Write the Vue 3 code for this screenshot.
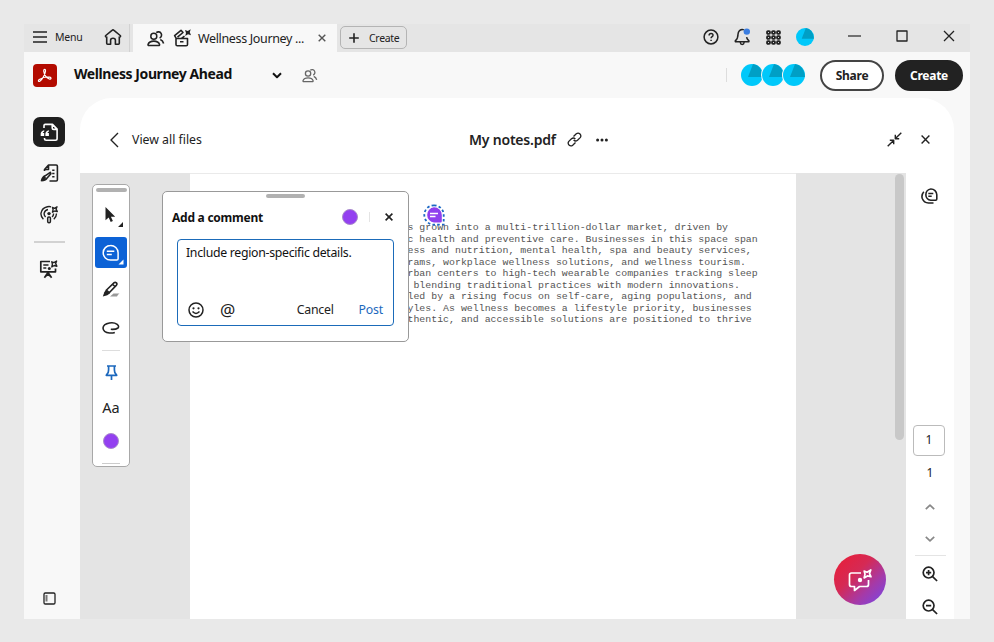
<script setup>
import { ref } from 'vue'

const comment = ref('Include region-specific details.')

const notes = [
    's grown into a multi-trillion-dollar market, driven by',
    'c health and preventive care. Businesses in this space span',
    'ess and nutrition, mental health, spa and beauty services,',
    'rams, workplace wellness solutions, and wellness tourism.',
    'rban centers to high-tech wearable companies tracking sleep',
    ' blending traditional practices with modern innovations.',
    'led by a rising focus on self-care, aging populations, and',
    'yles. As wellness becomes a lifestyle priority, businesses',
    'thentic, and accessible solutions are positioned to thrive'
]
</script>

<template>
    <div class="window">
        <div class="tabs">
            <div class="tabs__menu">
                <svg width="14" height="12" viewBox="0 0 14 12"><path d="M0 1h14M0 6h14M0 11h14" stroke-width="1.5" /></svg>
                <span class="tabs__menu-text">Menu</span>
                <svg class="tabs__home" width="18" height="18" viewBox="0 0 18 18">
                    <path d="M2.2 8.9q-1.300-.4-.4-1.400L8 2.300q1-.9 2 0l6.200 5.200q.9 1-.4 1.400M2.700 8.500v6.800q0 .9.9.9h3v-4q0-1.900 2.400-1.900t2.400 1.900v4h3q.9 0 .9-.9V8.500" stroke-width="1.600" />
                </svg>
            </div>
            <div class="tab">
                <svg width="18" height="17" viewBox="0 0 18 17">
                    <circle cx="6.8" cy="6.2" r="3" />
                    <path d="M2 15.500q-1.200 0-.9-1.200 1.200-3.200 5.700-3.200t5.700 3.200q.3 1.200-.9 1.200zM9.300 2.600a3.200 3.200 0 1 1 3.300 5.400M13.300 9.500q2.600 1.100 3.300 4" stroke-width="1.600" />
                </svg>
                <svg class="tab__kit" width="19" height="18" viewBox="0 0 19 18">
                    <path d="M3 9.500h11.500v6q0 1.300-1.300 1.300H4.300q-1.300 0-1.300-1.300zM7 12.800h3.500M3.200 9.300 1.600 6.700 8 1.300l2 2.200-5.500 4.600M8.500 9.300l3-2.200" stroke-width="1.600" />
                    <path class="fill" d="m12 1 2.800 1L17.700.3l-.9 2.900L18 6.200l-3-1-2.800 1.700.8-3z" />
                </svg>
                <span class="tab__title">Wellness Journey ...</span>
                <svg class="tab__close" width="8" height="8" viewBox="0 0 8 8"><path d="m.7.7 6.6 6.6m0-6.6L.7 7.3" stroke-width="1.4" /></svg>
            </div>
            <button class="tabs__create">
                <svg width="10" height="10" viewBox="0 0 10 10"><path d="M5 .2v9.6M.2 5h9.6" stroke-width="1.6" /></svg>
                <span>Create</span>
            </button>
            <div class="tabs__tools">
                <svg width="16" height="16" viewBox="0 0 16 16">
                    <circle cx="8" cy="8" r="6.9" /><path d="M6.1 6.5q0-2 2-2t1.9 1.8q0 1-1.1 1.5-.8.5-.8 1.4M8.1 10.7v1.2" />
                </svg>
                <svg width="17" height="18" viewBox="0 0 17 18">
                    <path d="M9.8 1.9Q8.9 1.4 8 1.5 4.400 2 4 6.200c0 3.300-.6 4.800-2.500 6.400-.5.6-.2 1.200.4 1.200h12.400c.7 0 .9-.6.4-1.200-1.200-1.200-1.900-2-2.100-3.500M6.300 14.500q.2 1.900 1.900 1.900t1.900-1.900" />
                    <circle class="dot" cx="12.800" cy="3.600" r="3.200" />
                </svg>
                <svg width="15" height="15" viewBox="0 0 15 15">
                    <template v-for="row in 3" :key="row">
                        <rect v-for="col in 3" :key="col" :x="col * 5 - 3.900" :y="row * 5 - 3.900" width="2.800" height="2.800" rx=".8" stroke-width="1.900" />
                    </template>
                </svg>
                <svg width="18" height="18" viewBox="0 0 22 22">
                    <circle class="cyan" cx="11" cy="11" r="11" /><path class="teal" d="M7 13 12 0q9 1.400 10 13z" />
                </svg>
            </div>
            <div class="tabs__controls">
                <svg width="13" height="2" viewBox="0 0 13 2"><path d="M0 1h13" stroke-width="1.2" /></svg>
                <svg width="12" height="12" viewBox="0 0 12 12"><path d="M1 1h10v10H1z" stroke-width="1.3" /></svg>
                <svg width="12" height="12" viewBox="0 0 12 12"><path d="m1 1 10 10m0-10L1 11" stroke-width="1.3" /></svg>
            </div>
        </div>

        <header class="header">
            <svg class="header__logo" width="24" height="23" viewBox="0 0 24 23">
                <rect class="red" width="24" height="23" rx="4" />
                <path class="logo-line" d="M11.200 5.600q1.500-.7 1.300 1.500c-.5 3.300-3 8.300-5.700 10.200-1.500.7-2-.8-.5-1.800 2.700-1.700 7.300-2.800 10.300-2.300 2.300.5 1.500 2.300-.4 1.700-2.600-.9-4.900-4.200-5.500-7.700q-.1-1.300.5-1.600z" />
            </svg>
            <h1 class="header__title">Wellness Journey Ahead</h1>
            <svg class="header__chevron" width="10" height="7" viewBox="0 0 10 7"><path d="m1 1.300 4 3.900 4-3.900" stroke-width="2" /></svg>
            <svg class="header__people" width="16" height="15" viewBox="0 0 18 17">
                <circle cx="6.8" cy="6.200" r="3" />
                <path d="M2 15.500q-1.200 0-.9-1.200 1.200-3.200 5.700-3.200t5.700 3.200q.3 1.200-.9 1.200zM9.300 2.600a3.200 3.200 0 1 1 3.300 5.400M13.300 9.500q2.600 1.100 3.300 4" />
            </svg>
            <div class="header__avatars">
                <svg v-for="i in 3" :key="i" width="24" height="24" viewBox="-1 -1 24 24">
                    <circle class="halo" cx="11" cy="11" r="12" />
                    <circle class="cyan" cx="11" cy="11" r="11" /><path class="teal" d="M7 13 12 0q9 1.400 10 13z" />
                </svg>
            </div>
            <button class="pill">Share</button>
            <button class="pill pill--dark">Create</button>
        </header>

        <div class="body">
            <nav class="rail">
                <div class="rail__active">
                    <svg width="19" height="19" viewBox="0 0 19 19">
                        <path d="M4 5V2.600q0-1.200 1.200-1.200h7.300l4.600 4.700v9.500q0 1.700-1.700 1.700H6.200q-1.700 0-1.700-1.700v-.7M12.200 1.700v3.200q0 1.500 1.500 1.500h3.100" stroke-width="1.600" />
                        <path class="white-fill" d="M4.200 7.200Q.9 8.100.7 10.400v2.500h3.500V9.900H2.700q.2-1 1.500-1.500zm4.700 0q-3.300.9-3.500 3.200v2.500h3.500V9.900H7.400q.2-1 1.500-1.500z" />
                    </svg>
                </div>
                <svg class="rail__sign" width="19" height="19" viewBox="0 0 19 19">
                    <path d="M4.500 7V5.500L8.500 1h7.700q1.200 0 1.200 1.200v13.600q0 1.200-1.200 1.200H9.500M8.500 1.300v4.200H4.500M12.200 6.200h2.300M12.200 9.500h2.300M12.200 12.800h2.300" stroke-width="1.600" />
                    <path d="m10.300 8.300-5.200 3.500q-2.600 1.100-3.600 4.800 3.800 0 5.400-2.400l4-4.500zM2 16.200l3.500-3" stroke-width="1.600" />
                </svg>
                <svg class="rail__cast" width="19" height="19" viewBox="0 0 19 19">
                    <path d="M3.400 14.200Q.6 11.600 1 8.200q.9-5.400 6.400-6.500 2-.4 3.700.1M5.600 12q-2-1.900-1.300-4.300.8-2.700 3.700-3.200M13.500 8.500q.2 2-1.400 3.500M16.400 8.500q.3 3.300-2.600 5.700" stroke-width="1.400" />
                    <circle class="fill" cx="9" cy="8.600" r="1.700" /><rect x="7.700" y="11.900" width="2.700" height="5.800" rx="1.200" />
                    <path class="spark" d="m12.500 2.500 2 .8L17 1.800l-.9 2.300 1.200 2.400-2.500-.5-2.300 1.200.6-2.600z" />
                </svg>
                <div class="rail__line"></div>
                <svg class="rail__board" width="20" height="20" viewBox="0 0 20 20">
                    <path d="M11 2.500H1.800v10.300h14.700V9.500M4.300 6h5.200M4.300 9h3M9 13.500l-3.600 5.300M9 13.500l3.600 5.300M6.800 17l2.200-1.500 2.200 1.500" stroke-width="1.700" />
                    <path class="spark" d="m12.800 2.800 2.100.9 2.700-1.600-.9 2.500 1.200 2.600-2.700-.7-2.400 1.400.6-2.700z" /><circle class="fill" cx="10.300" cy="9.600" r="1.500" />
                </svg>
                <svg class="rail__panel" width="13" height="13" viewBox="0 0 13 13">
                    <rect x="1" y="1" width="11" height="11" rx="1.300" stroke-width="1.300" /><path class="rail__bar" d="M3.500 3v6.500" />
                </svg>
            </nav>

            <main class="panel">
                <div class="panel__head">
                    <svg width="10" height="16" viewBox="0 0 10 16"><path d="M9 1 2 8l7 7" stroke-width="1.400" /></svg>
                    <span class="panel__back">View all files</span>
                    <strong class="panel__file">My notes.pdf</strong>
                    <svg class="panel__link" width="15" height="15" viewBox="0 0 15 15">
                        <path d="M6.500 4.500 9.300 1.800q1.900-1.500 3.700.2 1.600 1.800.2 3.600l-2.700 2.700Q8.500 9.800 6.600 8M8.500 10.500l-2.800 2.700Q3.800 14.700 2 13 .4 11.200 1.800 9.400l2.700-2.700q2-1.500 3.900.3" stroke-width="1.300" />
                    </svg>
                    <svg class="panel__dots" width="12" height="4" viewBox="0 0 12 4"><circle class="fill" cx="1.600" cy="2" r="1.500" /><circle class="fill" cx="6" cy="2" r="1.500" /><circle class="fill" cx="10.400" cy="2" r="1.500" /></svg>
                    <svg class="panel__shrink" width="15" height="15" viewBox="0 0 15 15"><path d="M14.300.7 8.700 6.300M8.300 2.800v3.900h3.900M.7 14.300l5.600-5.600M2.800 8.300h3.900v3.900" stroke-width="1.400" /></svg>
                    <svg class="panel__close" width="9" height="9" viewBox="0 0 9 9"><path d="m.6.6 7.800 7.800m0-7.800L.6 8.400" stroke-width="1.400" /></svg>
                </div>

                <div class="panel__content">
                    <div class="viewer">
                        <div class="page">
                            <p v-for="line in notes" :key="line" class="page__line">{{ line }}</p>
                        </div>
                        <svg class="marker" width="22" height="22" viewBox="0 0 22 22">
                            <path class="marker__ring" d="M11 1.300a9.600 9.600 0 0 1 9.700 9.700v9.700H11A9.700 9.700 0 0 1 11 1.300z" />
                            <path class="purple" d="M11 3.300a7.700 7.700 0 0 1 7.800 7.700v6.300q0 1.300-1.300 1.300H11a7.700 7.700 0 0 1 0-15.300z" />
                            <path class="white" d="M7 9.500h8M7 12.500h5.500" />
                        </svg>
                        <div class="scroll"></div>

                        <div class="toolbar">
                            <div class="toolbar__grip"></div>
                            <svg class="toolbar__arrow" width="20" height="22" viewBox="0 0 20 22">
                                <path class="fill" d="M1.500 1v13.300l3.200-2.800 2 4.500 2.200-1-2-4.300h4.300zM19 16v5h-5z" />
                            </svg>
                            <div class="toolbar__active">
                                <svg width="32" height="31" viewBox="0 0 32 31">
                                    <path class="white" d="M15.500 8.500a7.400 7.400 0 0 1 7.600 7.300v6q0 1.300-1.300 1.300h-6.300a7.300 7.300 0 0 1 0-14.600zM11.800 14.200h7.500M11.800 17.500h5" />
                                    <path class="white-fill" d="M28.500 22.500v5h-5z" />
                                </svg>
                            </div>
                            <svg class="toolbar__pen" width="18" height="17" viewBox="0 0 18 17">
                                <path d="m4.500 9 7.700-7.300q1-.9 2.200.2 1 1.100.1 2.200L7.200 11.800zM10.600 3.200l2.500 2.500" stroke-width="1.600" />
                                <path class="fill" d="m3.900 8.700 3.900 3.700-2.500 1.800L.8 15.600l1.500-4.300z" /><path class="shade" d="m8 15.500 3.500-3h6l-1.500 1.300-1 1.700z" />
                            </svg>
                            <svg class="toolbar__loop" width="18" height="14" viewBox="0 0 18 14">
                                <path d="M8.800 8.300q5 .3 7.200-1.300 1.500-1.800-.8-3.700Q12 1.200 7.500 2 1.300 3.200 1 7q.3 4.500 6.500 5 3 .2 5.300-.5" stroke-width="1.600" />
                            </svg>
                            <div class="toolbar__line"></div>
                            <svg class="toolbar__pin" width="13" height="16" viewBox="0 0 13 16">
                                <path d="M2 1h9M3.600 1v3.800L3.200 7.500 1.300 10.300h10.400L9.800 7.500l-.4-2.700V1M6.500 10.500V15" stroke-width="1.700" />
                            </svg>
                            <span class="toolbar__font">Aa</span>
                            <span class="swatch"></span>
                            <div class="toolbar__line toolbar__line--last"></div>
                        </div>

                        <div class="popup">
                            <div class="popup__grip"></div>
                            <div class="popup__head">
                                <h2>Add a comment</h2>
                                <span class="swatch"></span>
                                <i></i>
                                <svg width="8" height="8" viewBox="0 0 8 8"><path d="m.6.6 6.800 6.800m0-6.800L.6 7.400" stroke-width="1.600" /></svg>
                            </div>
                            <div class="popup__box">
                                <p>{{ comment }}</p>
                                <div class="popup__actions">
                                    <svg width="16" height="16" viewBox="0 0 16 16">
                                        <circle cx="8" cy="8" r="7" /><circle class="fill" cx="5.500" cy="6.300" r="1.100" /><circle class="fill" cx="10.500" cy="6.300" r="1.100" /><path d="M4.500 9.500q3.500 3.800 7 0" />
                                    </svg>
                                    <span class="popup__at">@</span>
                                    <span class="popup__cancel">Cancel</span>
                                    <span class="popup__post">Post</span>
                                </div>
                            </div>
                        </div>

                        <div class="assistant">
                            <svg width="26" height="24" viewBox="0 0 26 24">
                                <path class="white" d="M14 5H4.500Q2.500 5 2.500 7v9.500q0 2 2 2H7.500v4l5-4h7q2 0 2-2V12" stroke-width="1.700" />
                                <path class="assistant__spark" d="m17.200 3 2.800 1.200L23.800 2l-1.300 3.400L24 8.800l-3.600-.9-3.300 2 .9-3.600z" />
                                <circle class="white-fill" cx="13" cy="12" r="2.200" />
                            </svg>
                        </div>
                    </div>

                    <aside class="side">
                        <svg class="side__comments" width="17" height="16" viewBox="0 0 17 16">
                            <path d="M9.800 1a5.900 5.900 0 0 1 6 5.800v4.300q0 1.200-1.200 1.200H9.800a5.700 5.700 0 0 1 0-11.300zM7.300 5.500h5M7.300 8.300h3.400M2.800 3.800Q.1 7 1.300 10.500q1.700 4.300 6.200 4.500h5" stroke-width="1.600" />
                        </svg>
                        <div class="side__page">1</div>
                        <span class="side__total">1</span>
                        <svg class="side__up" width="10" height="6" viewBox="0 0 10 6"><path d="m.8 5.200 4.200-4 4.200 4" stroke-width="1.700" /></svg>
                        <svg class="side__down" width="10" height="6" viewBox="0 0 10 6"><path d="m.8.8 4.200 4 4.200-4" stroke-width="1.700" /></svg>
                        <div class="side__line"></div>
                        <svg width="16" height="16" viewBox="0 0 16 16"><circle cx="6.600" cy="6.600" r="5.400" stroke-width="1.700" /><path d="m10.600 10.600 4.500 4.400M6.600 4v5.200M4 6.600h5.200" stroke-width="1.700" /></svg>
                        <svg class="side__out" width="16" height="16" viewBox="0 0 16 16"><circle cx="6.600" cy="6.600" r="5.400" stroke-width="1.700" /><path d="m10.600 10.600 4.500 4.400M4 6.600h5.200" stroke-width="1.700" /></svg>
                    </aside>
                </div>
            </main>
        </div>
    </div>
</template>

<style>
body {
    background: #e9e9e9;
    overflow: hidden;
}
</style>

<style scoped>
* {
    box-sizing: border-box;
}

.window {
    width: 946px;
    height: 595px;
    margin: 24px;
    display: flex;
    flex-direction: column;
    background: #f8f8f8;
    color: #222;
    font-family: "Noto Sans", "Open Sans", sans-serif;
    font-size: 12px;
    overflow: hidden;
}

h1,
h2,
p {
    margin: 0;
}

svg {
    display: block;
    flex: none;
    fill: none;
    stroke: #222;
    stroke-width: 1.5;
    stroke-linejoin: round;
}

.fill {
    fill: #222;
    stroke: none;
}

.white {
    stroke: #fff;
}

.logo-line {
    stroke: #fff;
    stroke-width: 1.2;
}

.white-fill {
    fill: #fff;
    stroke: none;
}

.halo {
    fill: #f8f8f8;
    stroke: none;
}

.spark {
    stroke-width: 1.4;
}

.dot {
    fill: #3b7de0;
    stroke: none;
}

.cyan {
    fill: #00c8fa;
    stroke: none;
}

.teal {
    fill: #009fc5;
    stroke: none;
}

.red {
    fill: #b30b00;
    stroke: none;
}

.purple {
    fill: #8f3fee;
    stroke: none;
}

.shade {
    fill: #999;
    stroke: none;
}

button {
    padding: 0;
    font-family: inherit;
    color: inherit;
}

/* title bar */
.tabs {
    display: flex;
    height: 28px;
    flex: none;
    background: #e5e5e5;
}

.tabs__menu {
    display: flex;
    align-items: center;
    width: 109px;
    padding: 0 0 2px 9px;
    background: linear-gradient(90deg, transparent 105px, #d2d2d2 105px, #d2d2d2 106px, transparent 106px);
}

.tabs__menu-text {
    width: 49px;
    margin-left: 8px;
    font-size: 10.5px;
    letter-spacing: -0.2px;
}

.tab {
    display: flex;
    align-items: center;
    width: 204px;
    padding-left: 14px;
    background: #f8f8f8;
}

.tab__kit {
    margin-left: 8px;
}

.tab__title {
    width: 112px;
    margin-left: 6px;
    font-size: 12.5px;
    letter-spacing: -0.35px;
    white-space: nowrap;
}

.tab__close {
    margin-left: 8px;
    stroke: #555;
}

.tabs__create {
    display: flex;
    align-items: center;
    gap: 10px;
    width: 67px;
    height: 23px;
    margin: 2px 0 0 3px;
    padding-left: 8px;
    border: 1px solid #b4b4b4;
    border-radius: 5px;
    background: none;
    font-size: 10.5px;
    letter-spacing: -0.3px;
}

.tabs__tools {
    display: flex;
    align-items: center;
    gap: 15px;
    margin: 0 34px 2px auto;
}

.tabs__controls {
    display: flex;
    align-items: center;
    gap: 35px;
    margin: 0 15px 4px 0;
}

/* document header */
.header {
    display: flex;
    align-items: center;
    flex: none;
    height: 46px;
    padding: 0 7px 0 9px;
}

.header__title {
    width: 181px;
    margin: -3px 0 0 17px;
    font-size: 14px;
    font-weight: 700;
    line-height: 20px;
    letter-spacing: -0.42px;
    white-space: nowrap;
    color: #111;
}

.header__chevron {
    margin-left: 17px;
    stroke: #111;
}

.header__people {
    margin-left: 20px;
    stroke: #666;
}

.header__avatars {
    display: flex;
    margin: 0 14px 0 auto;
    padding-left: 14px;
    background: linear-gradient(#ddd, #ddd) 0 5px / 1px 14px no-repeat;
}

.header__avatars svg + svg {
    margin-left: -3px;
}

.pill {
    width: 64px;
    height: 31px;
    border: 2px solid #444;
    border-radius: 16px;
    background: #fff;
    font-size: 12px;
    font-weight: 700;
    letter-spacing: -0.25px;
}

.pill--dark {
    width: 68px;
    margin-left: 11px;
    border-color: #222;
    background: #222;
    color: #fff;
}

.body {
    display: flex;
    flex: 1;
    min-height: 0;
}

/* left rail */
.rail {
    display: flex;
    flex-direction: column;
    align-items: center;
    width: 56px;
    padding: 19px 6px 14px 0;
}

.rail__active {
    display: flex;
    align-items: center;
    justify-content: center;
    width: 32px;
    height: 30px;
    border-radius: 7px;
    background: #1f1f1f;
}

.rail__active svg {
    stroke: #fff;
}

.rail__sign {
    margin-top: 17px;
}

.rail__cast {
    margin-top: 22px;
}

.rail__line {
    width: 31px;
    height: 2px;
    margin: 17px 0 16px;
    background: #d2d2d2;
}

.rail__panel {
    margin-top: auto;
}

.rail__bar {
    stroke: #777;
    stroke-width: 2;
}

/* file panel */
.panel {
    display: flex;
    flex-direction: column;
    width: 874px;
    border-radius: 32px 32px 0 0;
    background: #fff;
    overflow: hidden;
}

.panel__head {
    display: flex;
    align-items: center;
    flex: none;
    height: 75px;
    padding: 8px 24px 0 29px;
}

.panel__back {
    width: 337px;
    margin-left: 13px;
    font-size: 12.3px;
}

.panel__file {
    width: 98px;
    font-size: 14px;
    font-weight: 600;
    letter-spacing: -0.2px;
    white-space: nowrap;
}

.panel__dots {
    margin-left: 14px;
}

.panel__shrink {
    margin-left: auto;
}

.panel__close {
    margin-left: 19px;
}

.panel__content {
    display: flex;
    flex: 1;
}

.viewer {
    position: relative;
    width: 826px;
    background: #e4e4e4;
}

.page {
    width: 606px;
    height: 100%;
    margin-left: 110px;
    padding: 48px 0 0 217.5px;
    border-top: 1px solid #eaeaea;
    background: #fff;
}

.page__line {
    height: 11.5px;
    font-family: "Liberation Mono", monospace;
    font-size: 9.9px;
    line-height: 11.5px;
    letter-spacing: 0.01px;
    white-space: pre;
    color: #555;
}

.marker {
    position: absolute;
    left: 343px;
    top: 31px;
}

.marker__ring {
    stroke: #1b67c4;
    stroke-width: 1.8;
    stroke-dasharray: 2.6 2.2;
}

.scroll {
    position: absolute;
    left: 815px;
    top: 1px;
    width: 9px;
    height: 266px;
    border-radius: 5px;
    background: #c8c8c8;
}

.swatch {
    width: 16px;
    height: 16px;
    border: 1px solid #a98bcb;
    border-radius: 50%;
    background: #9340f0;
}

/* quick tools */
.toolbar {
    position: absolute;
    left: 12px;
    top: 11px;
    display: flex;
    flex-direction: column;
    align-items: center;
    width: 38px;
    height: 283px;
    border: 1px solid #a8a8a8;
    border-radius: 5px;
    background: #fff;
}

.toolbar__grip {
    width: 31px;
    height: 4px;
    margin-top: 3px;
    border-radius: 2px;
    background: #b1b1b1;
}

.toolbar__arrow {
    margin: 14px 0 0 6px;
}

.toolbar__active {
    width: 32px;
    height: 31px;
    margin-top: 9px;
    border-radius: 3px;
    background: #0c62d6;
}

.toolbar__pen {
    margin-top: 13px;
}

.toolbar__loop {
    margin-top: 23px;
}

.toolbar__line {
    width: 18px;
    height: 1px;
    margin-top: 15px;
    background: #ddd;
}

.toolbar__pin {
    margin-top: 14px;
    stroke: #1c68bd;
}

.toolbar__font {
    margin-top: 16px;
    font-size: 14.5px;
    line-height: 20px;
}

.toolbar .swatch {
    margin-top: 16px;
}

.toolbar__line--last {
    margin-top: 14px;
    background: #ccc;
}

/* comment popup */
.popup {
    position: absolute;
    left: 82px;
    top: 18px;
    width: 247px;
    height: 151px;
    border: 1px solid #999;
    border-radius: 5px;
    background: #fff;
}

.popup__grip {
    width: 39px;
    height: 4px;
    margin: 2px auto 0;
    border-radius: 2px;
    background: #b1b1b1;
}

.popup__head {
    display: flex;
    align-items: center;
    height: 20px;
    margin: 9px 15px 0 9px;
}

.popup__head h2 {
    flex: 1;
    font-size: 12px;
    font-weight: 700;
    letter-spacing: -0.25px;
    color: #111;
}

.popup__head i {
    width: 1px;
    height: 10px;
    margin: 0 15px 0 11px;
    background: #e4e4e4;
}

.popup__box {
    display: flex;
    flex-direction: column;
    justify-content: space-between;
    width: 217px;
    height: 87px;
    margin: 12px 0 0 14px;
    padding: 4px 10px 5px 8px;
    border: 1.5px solid #1b6bb9;
    border-radius: 4px;
    font-size: 12.3px;
    line-height: 18px;
}

.popup__box p {
    letter-spacing: -0.3px;
    color: #111;
    white-space: nowrap;
}

.popup__actions {
    display: flex;
    align-items: center;
    height: 20px;
    padding-left: 2px;
}

.popup__at {
    width: 18px;
    margin-left: 16px;
    font-size: 17px;
}

.popup__cancel {
    margin-left: auto;
    letter-spacing: -0.25px;
}

.popup__post {
    margin-left: 25px;
    letter-spacing: -0.2px;
    color: #1c68bd;
}

.assistant {
    position: absolute;
    left: 754px;
    top: 381px;
    display: flex;
    align-items: center;
    justify-content: center;
    width: 52px;
    height: 51px;
    border-radius: 50%;
    background: linear-gradient(135deg, #e6203c 10%, #d52a55 40%, #a53aa8 68%, #7b45e2 95%);
}

.assistant__spark {
    stroke: #fff;
    stroke-width: 1.7;
}

/* page navigation */
.side {
    display: flex;
    flex-direction: column;
    align-items: center;
    width: 48px;
    padding-top: 15px;
}

.side__comments {
    margin-right: 2px;
}

.side__page {
    width: 32px;
    height: 31px;
    margin: 221px 2px 0 0;
    border: 1px solid #bbb;
    border-radius: 4px;
    line-height: 28px;
    text-align: center;
}

.side__total {
    margin-top: 8px;
    line-height: 18px;
}

.side__up {
    margin-top: 22px;
    stroke: #888;
}

.side__down {
    margin-top: 26px;
    stroke: #888;
}

.side__line {
    width: 31px;
    height: 1px;
    margin: 13px 0 10px;
    background: #e4e4e4;
}

.side__out {
    margin-top: 17px;
}
</style>
